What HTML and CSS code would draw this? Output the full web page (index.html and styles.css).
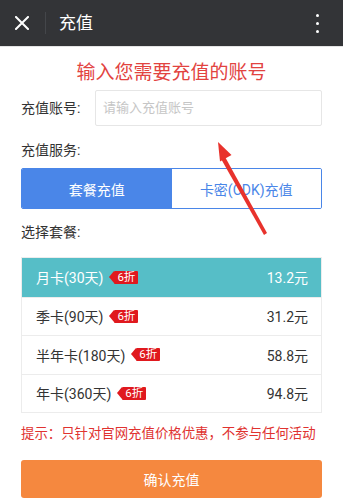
FILE: index.html
```html
<!DOCTYPE html>
<html lang="zh">
<head>
<meta charset="utf-8">
<link rel="stylesheet" href="styles.css">
</head>
<body>
<header class="topbar">
  <svg class="close" viewBox="0 0 14 14" width="14" height="14"><path d="M1 1L13 13M13 1L1 13" stroke="#fff" stroke-width="2" stroke-linecap="square"/></svg>
  <span class="sep"></span>
  <span class="title">充值</span>
  <span class="more"><i></i><i></i><i></i></span>
</header>
<main class="page">
  <h1 class="headline">输入您需要充值的账号</h1>
  <div class="field">
    <label class="label">充值账号:</label>
    <div class="input">请输入充值账号</div>
  </div>
  <div class="label row-label">充值服务:</div>
  <div class="tabs">
    <div class="tab active">套餐充值</div>
    <div class="tab">卡密(CDK)充值</div>
  </div>
  <div class="label row-label2">选择套餐:</div>
  <ul class="plans">
    <li class="plan selected"><span class="name">月卡(30天)</span><span class="badge">6折</span><span class="price">13.2元</span></li>
    <li class="plan"><span class="name">季卡(90天)</span><span class="badge">6折</span><span class="price">31.2元</span></li>
    <li class="plan"><span class="name">半年卡(180天)</span><span class="badge">6折</span><span class="price">58.8元</span></li>
    <li class="plan"><span class="name">年卡(360天)</span><span class="badge">6折</span><span class="price">94.8元</span></li>
  </ul>
  <p class="tip">提示：只针对官网充值价格优惠，不参与任何活动</p>
  <button class="confirm">确认充值</button>
</main>
<svg class="arrow" viewBox="0 0 343 500" width="343" height="500">
  <polygon points="264,235 267,233 224,155 220,157" fill="#e8322c"/>
  <polygon points="218,142 231.5,155 220,161.5" fill="#e8322c"/>
</svg>
</body>
</html>
```
FILE: styles.css
```css
* { box-sizing: border-box; margin: 0; padding: 0; }
html, body { width: 343px; height: 500px; overflow: hidden; }
body {
  font-family: Roboto, "Noto Sans CJK SC", sans-serif;
  background: #fff;
  color: #333;
  position: relative;
}
.topbar {
  height: 47px;
  background: #333437;
  border-bottom: 1px solid #e4e4e4;
  display: flex;
  align-items: center;
  padding-left: 15px;
}
.close { display: block; }
.sep {
  width: 1px;
  height: 22px;
  background: #44464a;
  margin-left: 16px;
}
.title {
  color: #fff;
  font-size: 17px;
  margin-left: 13px;
  line-height: 1;
}
.more {
  margin-left: auto;
  margin-right: 24px;
  display: flex;
  flex-direction: column;
  gap: 5px;
}
.more i {
  display: block;
  width: 3px;
  height: 3px;
  background: #fff;
  border-radius: 50%;
}
.page { padding: 0 21px; }
.headline {
  font-size: 19px;
  font-weight: normal;
  color: #e2433f;
  text-align: center;
  line-height: 24px;
  margin-top: 14px;
}
.field {
  display: flex;
  align-items: center;
  margin-top: 5px;
}
.label {
  font-size: 14px;
  color: #333;
  line-height: 20px;
}
.field .label { width: 74px; }
.input {
  flex: 1;
  height: 36px;
  border: 1px solid #e6e6e6;
  border-radius: 2px;
  font-size: 13px;
  color: #c6c6c6;
  padding-left: 7px;
  line-height: 34px;
}
.row-label { margin-top: 14px; }
.tabs {
  display: flex;
  height: 41px;
  margin-top: 8px;
  border: 1px solid #4a86e8;
  border-radius: 2px;
  overflow: hidden;
}
.tab {
  flex: 1;
  display: flex;
  align-items: center;
  justify-content: center;
  font-size: 14px;
  color: #4a86e8;
  background: #fff;
}
.tab.active { background: #4a86e8; color: #fff; }
.row-label2 { margin-top: 13px; }
.plans {
  list-style: none;
  margin-top: 15px;
  border: 1px solid #ececec;
}
.plan {
  display: flex;
  align-items: center;
  height: 38.5px;
  padding: 0 13px 0 14px;
  font-size: 14px;
  color: #333;
  border-top: 1px solid #ececec;
}
.plan:first-child { border-top: none; }
.plan.selected { background: #56bec7; color: #fff; }
.badge {
  position: relative;
  margin-left: 11px;
  height: 13px;
  line-height: 13px;
  background: #e0191e;
  color: #fff;
  font-size: 11.5px;
  padding: 0 3px 0 3px;
  border-radius: 1px;
}
.badge::before {
  content: "";
  position: absolute;
  left: -5px;
  top: 0;
  border-right: 5px solid #e0191e;
  border-top: 6.5px solid transparent;
  border-bottom: 6.5px solid transparent;
}
.price { margin-left: auto; }
.tip {
  font-size: 13.4px;
  color: #e0322f;
  line-height: 20px;
  margin-top: 11px;
  white-space: nowrap;
}
.confirm {
  display: block;
  width: 100%;
  height: 38px;
  margin-top: 16px;
  background: #f5883f;
  border: none;
  border-radius: 3px;
  color: #fff;
  font-family: inherit;
  font-size: 14px;
}
.arrow {
  position: absolute;
  left: 0;
  top: 0;
  pointer-events: none;
}
```
